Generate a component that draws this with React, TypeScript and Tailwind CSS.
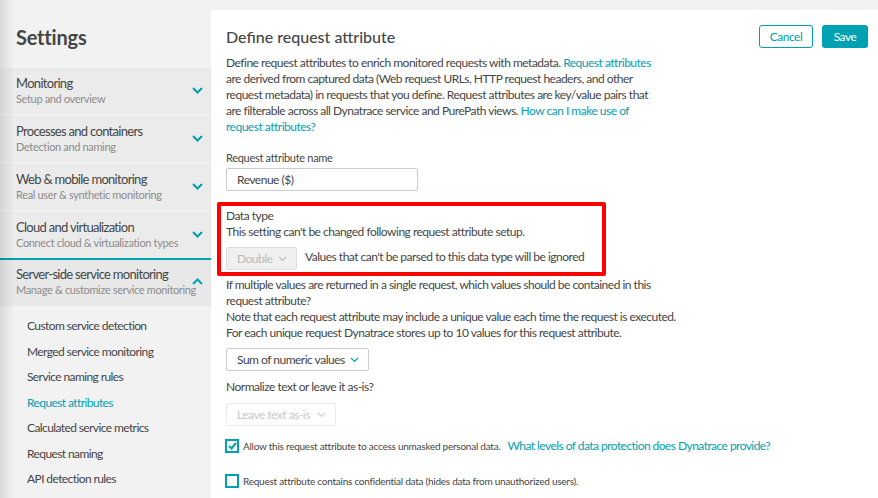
import React from "react";

const sections = [
  { title: "Monitoring", sub: "Setup and overview" },
  { title: "Processes and containers", sub: "Detection and naming" },
  { title: "Web & mobile monitoring", sub: "Real user & synthetic monitoring" },
  { title: "Cloud and virtualization", sub: "Connect cloud & virtualization types" },
];

const subItems = [
  "Custom service detection",
  "Merged service monitoring",
  "Service naming rules",
  "Request attributes",
  "Calculated service metrics",
  "Request naming",
  "API detection rules",
];

const Chevron = ({ up = false, color = "#00a1b2" }: { up?: boolean; color?: string }) => (
  <svg width="11" height="7" viewBox="0 0 11 7" fill="none">
    <polyline
      points={up ? "1,6 5.5,1.5 10,6" : "1,1 5.5,5.5 10,1"}
      stroke={color}
      strokeWidth="2"
    />
  </svg>
);

const SmallChevron = ({ color }: { color: string }) => (
  <svg width="9" height="6" viewBox="0 0 9 6" fill="none">
    <polyline points="1,1 4.5,4.5 8,1" stroke={color} strokeWidth="1.2" />
  </svg>
);

const Sidebar = () => (
  <aside className="relative w-[211px] shrink-0 bg-[#f2f2f2] text-[#454646]">
    <div className="h-[66px] pl-4 pt-[23px] text-[20px] font-bold leading-[28px] tracking-[-0.2px]">
      Settings
    </div>
    {sections.map((s) => (
      <div
        key={s.title}
        className="flex h-[48px] items-center justify-between border-t border-[#f7f7f7] bg-[#ebebeb] pl-4 pr-[8px]"
      >
        <div>
          <div className="text-[13px] leading-[16px] tracking-[-0.7px]">{s.title}</div>
          <div className="text-[11px] leading-[16px] tracking-[-0.35px] text-[#8c8c8c]">{s.sub}</div>
        </div>
        <Chevron />
      </div>
    ))}
    <div className="flex h-[48px] items-center justify-between border-t-2 border-[#00a1b2] bg-[#e8e8e8] pl-4 pr-[8px]">
      <div className="-mt-[2px]">
        <div className="text-[13px] leading-[16px] tracking-[-0.7px]">Server-side service monitoring</div>
        <div className="text-[11px] leading-[16px] tracking-[-0.35px] text-[#8c8c8c]">
          Manage & customize service monitoring
        </div>
      </div>
      <div className="-ml-3 -mt-[4px]">
        <Chevron up />
      </div>
    </div>
    <ul className="pl-[27px] pt-[7px]">
      {subItems.map((i) => (
        <li
          key={i}
          className={`h-[25.5px] text-[12px] leading-[25.5px] tracking-[-0.6px] ${
            i === "Request attributes" ? "text-[#00a1b2]" : "text-[#454646]"
          }`}
        >
          {i}
        </li>
      ))}
    </ul>
    <div className="pointer-events-none absolute inset-y-0 left-0 w-[14px] bg-gradient-to-r from-black/10 to-transparent" />
  </aside>
);

const Link = ({ children }: { children: React.ReactNode }) => (
  <span className="text-[#00a1b2]">{children}</span>
);

export default function App() {
  return (
    <div
      className="flex h-[498px] w-full overflow-hidden bg-[#f2f2f2] text-[#454646]"
      style={{ fontFamily: "Lato, 'Liberation Sans', sans-serif" }}
    >
      <Sidebar />
      <main className="mt-[10px] flex-1 bg-white pl-[15px] pr-[10px] text-[12px] leading-4 tracking-[-0.5px]">
        <div className="flex items-center justify-between pt-[15px]">
          <h1 className="text-[16px] font-medium leading-[22px] tracking-normal">Define request attribute</h1>
          <div className="flex gap-[9px]">
            <button className="h-[23px] w-[54px] rounded-[3px] border border-[#00a1b2] bg-white text-[12px] text-[#00a1b2]">
              Cancel
            </button>
            <button className="h-[23px] w-[46px] rounded-[3px] bg-[#00a1b2] text-[12px] text-white">
              Save
            </button>
          </div>
        </div>

        <p className="mt-[7px] w-[436px]">
          Define request attributes to enrich monitored requests with metadata.{" "}
          <Link>Request attributes</Link> are derived from captured data (Web request URLs, HTTP request
          headers, and other request metadata) in requests that you define. Request attributes are
          key/value pairs that are filterable across all Dynatrace service and PurePath views.{" "}
          <Link>How can I make use of request attributes?</Link>
        </p>

        <div className="mt-[16px] text-[11px] leading-[14px] tracking-[-0.3px]">Request attribute name</div>
        <div className="mt-[3px] flex h-[23px] w-[192px] items-center rounded-[2px] border border-[#cccccc] pl-[10px]">
          Revenue ($)
        </div>

        <section className="-ml-[9px] mt-[11px] w-[389px] rounded-[2px] border-4 border-[#ff0000] px-[5px] pb-[2px] pt-[2px]">
          <div>Data type</div>
          <div>This setting can't be changed following request attribute setup.</div>
          <div className="mt-[7px] flex items-center gap-[8px]">
            <div className="flex h-[23px] w-[71px] items-center justify-between rounded-[2px] border border-[#dddddd] bg-[#f0f0f0] pl-[10px] pr-[9px] text-[#b9b9b9]">
              Double
              <SmallChevron color="#c0c0c0" />
            </div>
            <span className="-mt-[4px]">Values that can't be parsed to this data type will be ignored</span>
          </div>
        </section>

        <p className="mt-[1px] w-[456px]">
          If multiple values are returned in a single request, which values should be contained in this
          request attribute?
          <br />
          Note that each request attribute may include a unique value each time the request is executed.
          <br />
          For each unique request Dynatrace stores up to 10 values for this request attribute.
        </p>

        <div className="mt-[7px] flex h-[23px] w-[143px] items-center justify-between rounded-[2px] border border-[#cccccc] pl-[10px] pr-[9px]">
          Sum of numeric values
          <SmallChevron color="#00a1b2" />
        </div>

        <div className="mt-[8px]">Normalize text or leave it as-is?</div>
        <div className="mt-[8px] flex h-[23px] w-[110px] items-center justify-between rounded-[2px] border border-[#ebebeb] pl-[10px] pr-[9px] text-[#c8c8c8]">
          Leave text as-is
          <SmallChevron color="#d0d0d0" />
        </div>

        <label className="-ml-[1px] mt-[12px] flex items-center gap-[4px]">
          <span className="flex h-[14px] w-[14px] items-center justify-center border-2 border-[#00a1b2]">
            <svg width="9" height="8" viewBox="0 0 9 8" fill="none">
              <polyline points="1,4 3.5,6.5 8,1" stroke="#00a1b2" strokeWidth="2" />
            </svg>
          </span>
          <span className="text-[10px] tracking-[-0.25px]">
            Allow this request attribute to access unmasked personal data.
          </span>
          <span className="ml-[3px] text-[12px] tracking-[-0.55px] text-[#00a1b2]">
            What levels of data protection does Dynatrace provide?
          </span>
        </label>

        <label className="-ml-[1px] mt-[19px] flex items-center gap-[4px]">
          <span className="h-[14px] w-[14px] border-2 border-[#00a1b2]" />
          <span className="text-[10px] tracking-[-0.25px]">
            Request attribute contains confidential data (hides data from unauthorized users).
          </span>
        </label>
      </main>
    </div>
  );
}
